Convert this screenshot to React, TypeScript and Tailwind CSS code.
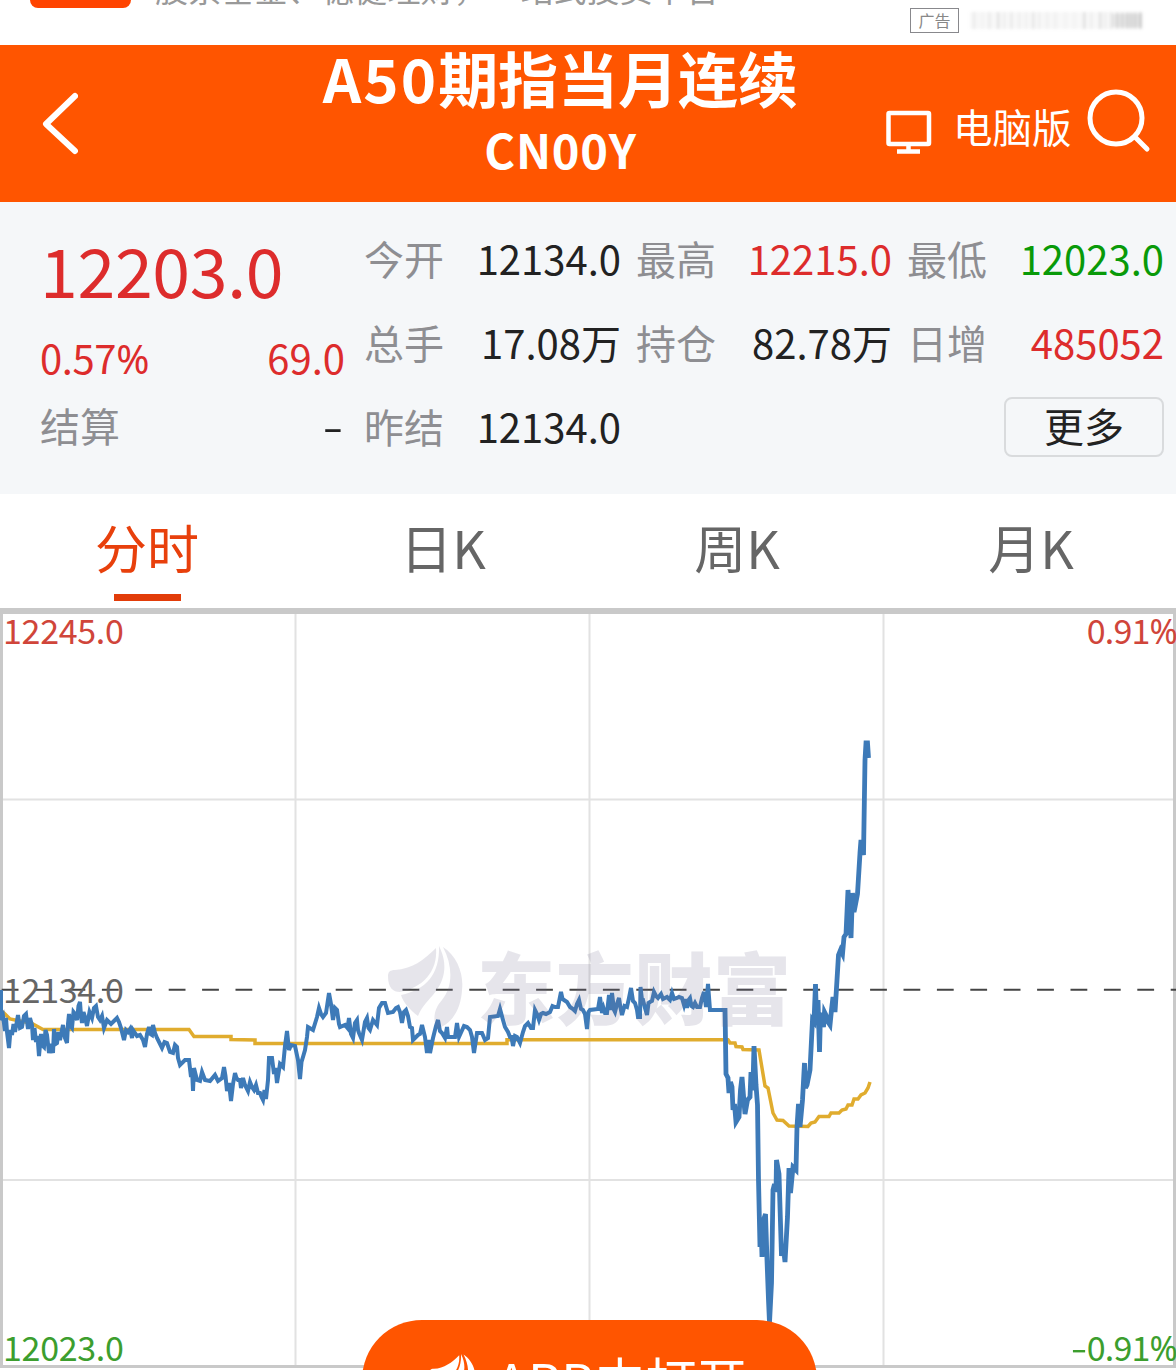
import { clsx } from "clsx";

const quotes = [
  { label: "今开", value: "12134.0", color: "text-[#222]" },
  { label: "最高", value: "12215.0", color: "text-[#dd2c2c]" },
  { label: "最低", value: "12023.0", color: "text-[#099a09]" },
  { label: "总手", value: "17.08万", color: "text-[#222]" },
  { label: "持仓", value: "82.78万", color: "text-[#222]" },
  { label: "日增", value: "485052", color: "text-[#dd2c2c]" },
  { label: "昨结", value: "12134.0", color: "text-[#222]" },
];

const tabs = ["分时", "日K", "周K", "月K"];

// minute price line
const price =
  "1,990 1,1020 3,1016 5,1031 6,1018 7,1032 9,1048 10.5,1030 12,1035 13.5,1024 15,1032 18,1015 20,1028 22,1027 24,1016 26,1014 28,1029 30,1018 32,1025 33,1040 34.5,1028 36,1042 37.5,1036 39,1056 41,1034 42,1045 44,1047 45.5,1030 47,1035 49,1053 51,1044 53,1053 54,1029 55.5,1044 57,1043 58.5,1032 60,1040 63,1025 65,1038 67,1043 68,1024 69,1014 70.5,1026 72,1028 73.5,1012 75,1014 77,1020 78.5,1006 80,1002 81,1016 82,1023 83.5,1012 85,1017 87,1026 89.5,1012 92,1018 94,1008 96,1006 98,1017 100,1020 102,1016 104,1028 107,1020 111,1024 115,1020 117,1018 119,1022 121,1028 124,1040 126,1030 128,1032 130,1029 132,1038 133,1030 137,1036 140,1035 143,1040 145,1047 147,1034 149,1027 150.5,1034 152,1035 153,1025 155,1033 157,1038 162,1048 164.5,1042 167,1043 170,1052 173,1053 175,1045 177,1047 178,1058 180,1065 185,1060 189,1060 191,1077 192,1068 193,1091 194,1068 197,1080 200,1081 202,1072 205,1080 210,1081 215,1075 218,1081 222,1078 224,1067 225.5,1076 227,1091 229,1083 231,1101 233,1084 235,1073 236.5,1078 238,1080 240,1080 241,1088 243,1078 245,1085 248,1091 250,1082 252,1087 254,1090 256,1085 258,1093 260,1093 261.5,1097 263,1100 264.5,1090 266,1099 268,1080 269,1058 272,1058 274,1074 275.5,1068 277,1083 280,1064 283,1067 285,1046 287,1031 289,1050 291,1045 295,1046 298,1060 300,1079 301.5,1062 303,1057 305,1050 307,1037 308,1027 313,1030 317,1017 319,1008 321,1014 323,1017 326,1013 329,993 331,1004 333,1020 335,1008 337,1010 339,1024 340,1027 345,1025 347.5,1028 349,1018 351,1034 353,1038 355,1023 357,1020 358,1030 359,1033 362,1040 365,1022 367,1018 368.5,1028 370,1030 373,1020 377,1025 379,1008 382,1003 385,1003 388,1013 393,1012 396,1008 398,1007 400,1012 402,1023 404,1012 406,1010 408,1016 410,1027 412,1028 413,1040 418,1035 420,1034 422,1025 425,1037 427,1053 428.5,1040 430,1053 433,1038 436,1026 438,1020 440,1031 442,1033 445,1038 447,1027 448,1037 455,1037 457,1023 459,1037 464,1026 467,1027 470,1030 472,1037 474,1053 477,1033 482,1033 485,1040 488,1038 490,1017 498,1016 500,1009 503,1020 505,1027 508,1032 510,1037 511.5,1037 513,1046 515,1036 517,1037 520,1043 523,1032 525,1026 528,1023 531,1028 533,1028 535,1010 537,1014 539,1020 541,1014 543,1013 546,1014 550,1012 552.5,1006 555,1007 558,1007 561,992 562.5,999 564,1000 567,1002 570,1007 573,1009 575,1011 577,1004 579,1000 581,1009 583,1010 585,1014 587,1029 588.5,1012 590,1010 598,1009 600,997 602,1013 603.5,1008 605,1013 607,1013 609,995 610.5,1010 612,993 614,1010 615,1012 617,1004 619,998 620.5,1008 622,1015 624.5,1006 627,1007 629,998 631,988 633,1001 635,1003 637,1010 638,1017 640,1017 640.5,987 642,1000 643,1000 645,1008 647,1015 648.5,1003 650,1002 652,1001 654,992 656,996 658,998 661,994 663,999 667,997 670,1000 672,993 674,999 677,998 679,997 682,998 684,1005 685.5,999 687,1008 688.5,1000 690,998 691.5,1006 693,1007 695,1003 697,1007 700,1007 702,998 704,992 706,1007 708,984 710,1010 725,1010";

// sharp moves after the day session opens
const priceLate =
  "725,1008 726,1074 728,1078 729,1093 730.5,1082 732,1087 733,1110 734.5,1104 736,1122 739,1117 740.5,1090 742,1077 743.5,1096 745,1114 747.5,1100 750,1097 751,1072 752,1090 753,1084 754,1046 756,1085 757.5,1105 758.5,1180 760,1247 761,1222 762,1257 763.5,1220 765.5,1214 767,1260 768.5,1300 769.5,1323 771.5,1283 773,1190 774.5,1184 776,1192 776.5,1160 779,1174 781.5,1256 783,1244 785,1262 787.5,1217 789,1168 790.5,1193 793,1167 796,1170 797,1127 798.5,1104 800,1127 802.5,1100 804.5,1063 805.5,1088 807,1085 810,1070 812.5,1020 814,1022 815.5,984 816.5,1020 818,1000 819.5,1052 820.5,1013 822,1018 823.5,1027 824.5,1012 826,1015 828,1022 830,1025 831.5,1010 833,997 835,1012 837,980 838.5,955 840.5,950 842.5,954 844,937 846,934 848,890 849.5,915 851,938 852.5,893 854,912 855,907 857.5,894 860,853 861,840 863.5,855 865,760 866,743 867.5,743 868.5,758";

const average =
  "0,1010 4,1013 10,1019 20,1021 31,1023 43,1029.5 189,1029.5 194,1036.5 231,1036.5 231,1039.5 255,1040 255,1043.5 507,1043.5 507,1039.7 728,1039.7 730,1043 735,1043 736,1046.5 742,1047 743,1049.5 759,1050 761,1062 765,1086 768,1088 773,1113 777,1120 783,1120.5 789,1126 808,1126.5 811,1123 815,1122 819,1116.5 829,1116.5 831,1113 839,1113 842,1110 846,1109 848,1105 852,1105 854,1099 858,1099 861,1095 865,1093 868,1088 870,1082";

const blurBars = [
  [973, 0.12], [981, 0.05], [988, 0.14], [997, 0.2], [1003, 0.1], [1010, 0.15], [1018, 0.1], [1025, 0.07],
  [1032, 0.17], [1038, 0.1], [1046, 0.08], [1054, 0.08], [1064, 0.05], [1073, 0.05], [1083, 0.22], [1090, 0.1],
  [1099, 0.2], [1104, 0.1], [1110, 0.15], [1116, 0.2], [1121, 0.2], [1126, 0.25], [1130, 0.22], [1134, 0.25], [1139, 0.32],
];

function Feather({ className }: { className: string }) {
  return (
    <svg viewBox="0 0 76 84" fill="currentColor" className={className}>
      <path d="M0 30C0 26 2 24 7 24C24 23 36 14 48 2C50 26 34 42 12 46C5 46 0 42 0 30Z" />
      <path d="M51 0C61 20 56 36 45 49C38 57 33 62 30 70C22 64 15 56 13 49C38 44 52 28 51 0Z" />
      <path d="M55 1C69 10 76 28 74 44C73 62 65 78 48 83C45 72 46 63 54 54C65 41 65 20 55 1Z" />
    </svg>
  );
}

// the percent sign is narrower than the digits' own
function Value({ text }: { text: string }) {
  if (!text.endsWith("%")) return <>{text}</>;
  return (
    <>
      {text.slice(0, -1)}
      <span className="font-['Noto_Sans',sans-serif]">%</span>
    </>
  );
}

export default function App() {
  return (
    <main className="flex h-[1370px] w-[1176px] flex-col overflow-hidden bg-white font-['Noto_Sans_CJK_SC',sans-serif]">
      <div className="flex h-[45px] shrink-0 items-start overflow-hidden">
        <div className="ml-[30px] h-2 w-[101px] rounded-b-[14px] bg-[#ff4400]" />
        <p className="-mt-[28px] ml-[24px] w-[600px] whitespace-nowrap text-[33px] leading-[33px] tracking-[0.2px] text-[#999]">
          股票基金、稳健理财，一站式投资平台
        </p>
        <span className="ml-[155px] mt-2 flex h-[25px] w-[49px] items-center justify-center border border-[#88888c] pb-px text-[16px] text-[#888]">
          广告
        </span>
        <svg viewBox="968 10 176 22" className="ml-[9px] mt-[10px] h-[22px] w-[176px] blur-[1.5px]">
          <rect x="970" y="12" width="173" height="17" fill="#777" opacity="0.05" />
          <rect x="1112" y="14" width="30" height="13" fill="#777" opacity="0.12" />
          {blurBars.map(([x, o]) => (
            <rect key={x} x={x} y="12" width="2.5" height="17" fill="#444" opacity={o * 0.6} />
          ))}
        </svg>
      </div>

      <header className="flex h-[157px] shrink-0 bg-[#ff5500] text-white">
        <button className="flex w-[322px] items-start pl-[42px] pt-[46px]">
          <svg viewBox="0 0 36 64" className="h-[64px] w-[36px]" fill="none" stroke="currentColor" strokeWidth="6" strokeLinecap="round" strokeLinejoin="round">
            <path d="M33 5L4 33L33 60" />
          </svg>
        </button>
        <div className="flex w-[477px] flex-col items-center whitespace-nowrap font-bold">
          <h1 className="mt-[2px] text-[60px] leading-[60px]">
            <span className="tracking-[2px]">A50</span>期指当月连续
          </h1>
          <h2 className="mt-[17px] text-[47px] leading-[50px] tracking-[0.7px]">CN00Y</h2>
        </div>
        <div className="ml-[87px] flex">
          <svg viewBox="0 0 46 44" className="mt-[65px] h-[44px] w-[46px]" fill="none" stroke="currentColor" strokeWidth="4.5">
            <rect x="2.5" y="3" width="40.5" height="31" rx="1" />
            <path d="M22.5 34V41M11 41.5H34" />
          </svg>
          <span className="ml-[21px] mt-[61px] text-[39.5px] leading-[40px]">电脑版</span>
          <svg viewBox="0 0 66 66" className="ml-[15px] mt-[43px] h-[66px] w-[66px]" fill="none" stroke="currentColor" strokeWidth="5" strokeLinecap="round">
            <circle cx="29" cy="30" r="26" />
            <path d="M48 49L60 61" />
          </svg>
        </div>
      </header>

      <section className="flex h-[292px] shrink-0 bg-[#f5f7f9] pl-[40px] text-[40px]">
        <div className="flex w-[305px] flex-col text-[#dd2c2c]">
          <strong className="mt-[30px] text-[68px] font-normal leading-[74px] tracking-[-0.3px]">12203.0</strong>
          <div className="mt-[26px] flex justify-between leading-[50px]">
            <span className="tracking-[-0.4px]">
              <Value text="0.57%" />
            </span>
            <span>69.0</span>
          </div>
          <div className="mt-[16px] flex justify-between leading-[50px]">
            <span className="text-[#8e8e92]">结算</span>
            <span className="mr-[5px] scale-x-150 text-[#222]">-</span>
          </div>
        </div>
        <div className="ml-[19px] mt-[14px] grid h-[252px] w-[800px] grid-cols-[257px_256px_257px] grid-rows-3 gap-x-[15px]">
          {quotes.map((q) => (
            <div key={q.label} className="flex items-center justify-between">
              <span className="text-[#8e8e92]">{q.label}</span>
              <span className={q.color}>{q.value}</span>
            </div>
          ))}
          <button className="col-start-3 mt-[13px] h-[60px] w-[160px] justify-self-end rounded-lg border-2 border-[#d9dbdd] pb-1 leading-[48px] text-[#222]">
            更多
          </button>
        </div>
      </section>

      <nav className="grid h-[114px] shrink-0 grid-cols-4 text-[52px] text-[#666]">
        {tabs.map((t, i) => (
          <div key={t} className={clsx("flex flex-col items-center", i === 0 ? "text-[#e8400c]" : "pl-[4px]")}>
            <span className="mt-[23px] leading-[60px]">{t}</span>
            {i === 0 && <span className="mt-[17px] h-[7px] w-[67px] bg-[#e23c09]" />}
          </div>
        ))}
      </nav>

      <section className="relative h-[762px] shrink-0 overflow-hidden">
        <svg viewBox="0 608 1176 762" className="h-[762px] w-[1176px]" fill="none">
          <path d="M295.5 614V1366M589.5 614V1366M883.5 614V1366M3 799.5H1173M3 1180H1173" stroke="#e2e2e2" strokeWidth="2" />
          <path d="M0 611H1176" stroke="#c9c9c9" strokeWidth="6" />
          <path d="M1.5 608V1368M1174.5 608V1368M0 1366.5H1176" stroke="#c9c9c9" strokeWidth="3" />
          <path d="M1.7 989.7H1176" stroke="#444" strokeWidth="2" strokeDasharray="16.8 16.6" />
          <polyline points={average} stroke="#e0ac2e" strokeWidth="3.5" />
          <polyline points={price} stroke="#3d7ab8" strokeWidth="4" />
          <polyline points={priceLate} stroke="#3d7ab8" strokeWidth="4.8" />
        </svg>
        <div className="absolute left-[388px] top-[338px] flex items-start text-[#77708f]/18">
          <Feather className="h-[84px] w-[76px]" />
          <span className="ml-[13px] -mt-px whitespace-nowrap text-[78px] font-black leading-[80px] tracking-[0.7px]">东方财富</span>
        </div>
        <span className="absolute left-[3px] top-[2px] text-[34px] leading-[40px] tracking-[-0.3px] text-[#d0453a]">12245.0</span>
        <span className="absolute -right-px top-[2px] text-[34px] leading-[40px] tracking-[-0.8px] text-[#d0453a]">
          <Value text="0.91%" />
        </span>
        <span className="absolute left-[3px] top-[361px] text-[34px] leading-[40px] tracking-[-0.3px] text-[#666]">12134.0</span>
        <span className="absolute left-[3px] top-[719px] text-[34px] leading-[40px] tracking-[-0.3px] text-[#3c9e2e]">12023.0</span>
        <span className="absolute -right-px top-[719px] text-[34px] leading-[40px] tracking-[-0.8px] text-[#3c9e2e]">
          <span className="mr-[3px] inline-block scale-x-140">-</span>
          <Value text="0.91%" />
        </span>
        <button className="absolute left-[362px] top-[712px] flex h-[120px] w-[455px] items-start rounded-[60px] bg-[#ff5500] pl-[66px] text-white">
          <Feather className="mt-[34px] h-[52px] w-[50px]" />
          <span className="ml-[18px] mt-[31px] whitespace-nowrap text-[51px] leading-[56px]">
            <span className="tracking-[1px]">APP</span>中打开
          </span>
        </button>
      </section>
    </main>
  );
}
